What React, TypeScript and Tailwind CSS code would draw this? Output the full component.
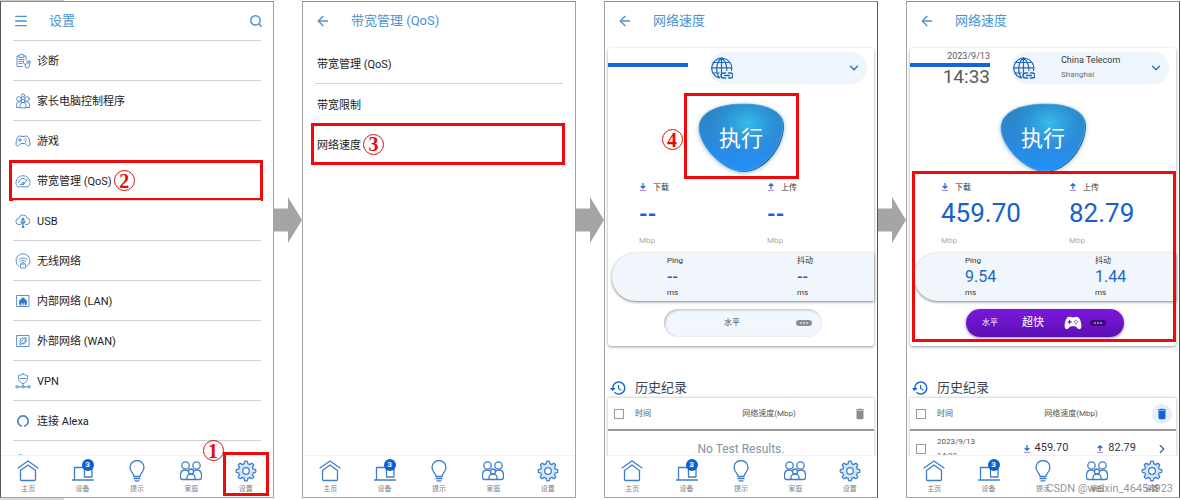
import React from 'react'
import clsx from 'clsx'
import { ArrowLeft, ChevronDown, ChevronRight, Menu, Search } from 'lucide-react'
import { IoGameController, IoGameControllerOutline } from 'react-icons/io5'
import { MdDelete, MdHistory } from 'react-icons/md'

interface Props {
  children?: React.ReactNode
  className?: string
}

// ---------- icons ----------

const ListIcon = ({ children }: Props): JSX.Element => (
  <svg className="size-4 shrink-0" viewBox="0 0 16 16" fill="none" stroke="#4a86c8" strokeWidth="0.9" strokeLinejoin="round" strokeLinecap="round">
    {children}
  </svg>
)

const DiagnoseIcon = (): JSX.Element => (
  <ListIcon>
    <path d="M4 3H2v10.500h5.500M9 3h2v3.500M4 4V2h1.200L5.800 1h1.400l.6 1H9v2z" />
    <path d="M4 6.500h5M4 8.500h3.500M4 10.500h3" />
    <path d="M8.500 8v1.500a1.800 1.800 0 0 0 3.600 0V8M10.300 11.400V13a2 2 0 0 0 4 0v-2.500" />
    <circle cx="14" cy="9" r="1.300" />
  </ListIcon>
)

const ParentIcon = (): JSX.Element => (
  <ListIcon>
    <circle cx="8" cy="2.500" r="1.600" />
    <circle cx="4" cy="6" r="2.300" />
    <circle cx="12" cy="6" r="2.300" />
    <circle cx="8" cy="8" r="1.700" />
    <path d="M5 14.500H1.500v-3a3 3 0 0 1 3-2.700h1M11 14.500h3.500v-3a3 3 0 0 0-3-2.700h-1M5 14.500v-2.200a3 3 0 0 1 6 0v2.200zM6.500 5V4.500M9.500 5V4.500" />
  </ListIcon>
)

const GaugeIcon = (): JSX.Element => (
  <ListIcon>
    <path d="M2.500 13.500C1.300 12.500 1 11 1 9.700a7 7 0 0 1 14 0c0 1.300-.4 2.800-1.500 3.800z" />
    <path d="M3.500 9.500a4.600 4.600 0 0 1 8-2.600M8.500 11.200 12 7M5 11.500h3" />
    <circle cx="8" cy="10.500" r="1.100" />
  </ListIcon>
)

const UsbIcon = (): JSX.Element => (
  <ListIcon>
    <path d="M5.500 11.500H4A3 3 0 0 1 3.800 5.500 4.200 4.200 0 0 1 12 5a3.300 3.300 0 0 1 .2 6.500h-1.700" />
    <path d="M8 14.500V5.500M6.800 6.800 8 5.200l1.200 1.600M6.300 8.300v1.400L8 11M9.700 8v1.500L8 10.500" strokeWidth="1.200" />
    <circle cx="8" cy="14" r="0.800" fill="#3572c0" />
  </ListIcon>
)

const WifiIcon = (): JSX.Element => (
  <ListIcon>
    <path d="M4 13.500a7 7 0 1 1 8 0" />
    <path d="M4 6.500a5.600 5.600 0 0 1 8 0M5.300 8.300a3.800 3.800 0 0 1 5.400 0M6.600 10a2 2 0 0 1 2.800 0" />
    <rect x="5.500" y="11" width="5" height="4" rx="0.500" />
  </ListIcon>
)

const LanIcon = (): JSX.Element => (
  <ListIcon>
    <rect x="2" y="2.500" width="12" height="11" />
    <path d="M4.500 11.500V7.500h1.300V6.200h1.200V5h2v1.200h1.200v1.300h1.300v4z" fill="#3572c0" />
    <path d="M6.500 11.700v-1.500M8 11.700v-1.500M9.500 11.700v-1.500" stroke="#fff" strokeWidth="0.600" />
  </ListIcon>
)

const WanIcon = (): JSX.Element => (
  <ListIcon>
    <rect x="2" y="2.500" width="12" height="11" />
    <circle cx="8" cy="8" r="3" />
    <path d="M5.300 9.500c-1 1.200-1.200 2-.6 2.200 1 .3 3-1.200 4.600-2.900s2.600-3.600 2-4.200c-.4-.4-1.300 0-2.200.6M6 8.500l2-1.500" />
  </ListIcon>
)

const VpnIcon = (): JSX.Element => (
  <ListIcon>
    <path d="M8 1c1.500 1 3 1.300 4.500 1.400V5.500c0 2.500-2 4.200-4.500 5.300C5.500 9.700 3.500 8 3.500 5.500V2.400C5 2.300 6.500 2 8 1z" />
    <path d="M5 5.500h6M8 10.800V13M3.500 13.800h3M9.500 13.800h3" />
    <circle cx="2" cy="13.800" r="1.200" />
    <circle cx="8" cy="13.800" r="1.200" />
    <circle cx="14" cy="13.800" r="1.200" />
  </ListIcon>
)

const AlexaIcon = (): JSX.Element => (
  <ListIcon>
    <path d="M6.300 13A5.200 5.200 0 1 1 9.700 13" strokeWidth="1.700" />
  </ListIcon>
)

const MoreIcon = (): JSX.Element => (
  <ListIcon>
    <path d="M4 2h4v2H4z" />
  </ListIcon>
)

const NavIcon = ({ children }: Props): JSX.Element => (
  <svg className="size-[22px]" viewBox="0 0 22 22" fill="none" stroke="#3f7dca" strokeWidth="1.300" strokeLinejoin="round" strokeLinecap="round">
    {children}
  </svg>
)

const gearPoints = Array.from({ length: 96 }, (_, i) => {
  const a = (i / 96) * Math.PI * 2
  const wave = Math.max(-1, Math.min(1, Math.cos(a * 8) * 2))
  const r = 8.6 + wave * 1.2
  return `${(11 + r * Math.sin(a)).toFixed(2)},${(11 - r * Math.cos(a)).toFixed(2)}`
}).join(' ')

const GlobeLinkIcon = (): JSX.Element => (
  <svg className="size-[22px] shrink-0" viewBox="1 1 22 22" fill="none" stroke="#2467b8" strokeWidth="1.200" strokeLinecap="round">
    <path d="M9 21.800A10 10 0 1 1 21.500 14.500" />
    <path d="M11.500 2C5.500 7 5.500 17 9.500 21.800M11.500 2C16 5.500 17 10 16.800 14.500M11.500 2v15M1.500 11.800H21.500M3.300 6.500h16.500M3.300 17h6" />
    <path d="M15.500 17h-2a2.500 2.500 0 0 0 0 5h2M18.500 17h2a2.500 2.500 0 0 1 0 5h-2M14.500 19.500h5" strokeWidth="1.500" />
  </svg>
)

const TransferIcon = ({ up = false }: { up?: boolean }): JSX.Element => (
  <svg className="size-2 shrink-0" viewBox="0 0 8 8" fill="none" stroke="#1c62c9" strokeWidth="1.200">
    <path d={up ? 'M4 6V1M1.700 3 4 .8 6.300 3' : 'M4 0v5M1.700 3 4 5.200 6.300 3'} />
    <path d="M1 7.400h6" stroke="#a06ad6" strokeWidth="0.900" />
  </svg>
)

// ---------- annotations ----------

const Step = ({ n, className }: { n: number, className?: string }): JSX.Element => (
  <span className={clsx('flex size-[21px] items-center justify-center rounded-full border border-[#e60b0b] font-["Liberation_Serif",serif] text-[20px] leading-none font-bold text-[#e60b0b]', className)}>
    {n}
  </span>
)

const RedBox = ({ className }: Props): JSX.Element => (
  <span className={clsx('pointer-events-none absolute border-3 border-[#ee0a0a]', className)} />
)

const FlowArrow = (): JSX.Element => (
  <svg className="mt-[195px] h-12 w-7 shrink-0" viewBox="0 0 28 48" fill="#a5a5a5">
    <path d="M0 12.500h14V1l14 23L14 47V35.500H0z" />
  </svg>
)

// ---------- phone frame ----------

const tabs = [
  {
    label: '主页',
    icon: <NavIcon><path d="M1 8 11 1l10 7M3.500 10.500 11 5l7.500 5.500v9a1 1 0 0 1-1 1h-13a1 1 0 0 1-1-1z" /></NavIcon>
  },
  {
    label: '设备',
    icon: <NavIcon><path d="M2.500 19V7.500H12M.500 20h21M20 9v8h-7.500V7" /></NavIcon>,
    badge: 3
  },
  {
    label: '提示',
    icon: (
      <NavIcon>
        <path d="M8 16.500c0-3-4-5-4-9a7 7 0 0 1 14 0c0 4-4 6-4 9z" />
        <path d="M8 18.500h6M9 20.800h4" />
      </NavIcon>
    )
  },
  {
    label: '家庭',
    icon: (
      <NavIcon>
        <circle cx="5.500" cy="5.500" r="3.700" />
        <circle cx="16.500" cy="5.500" r="3.700" />
        <circle cx="11" cy="11.500" r="2.500" />
        <path d="M7 19.500H2.500a2 2 0 0 1-2-2V15c0-3 2-5 5-5l2.500.8M15 19.500h4.500a2 2 0 0 0 2-2V15c0-3-2-5-5-5l-2.500.8M7 19.500v-2a4 3.500 0 0 1 8 0v2z" />
      </NavIcon>
    )
  },
  {
    label: '设置',
    icon: (
      <NavIcon>
        <polygon points={gearPoints} fill="#d3e8fb" />
        <circle cx="11" cy="11" r="3.300" fill="#fff" />
      </NavIcon>
    )
  }
]

const TabBar = ({ marked = false }: { marked?: boolean }): JSX.Element => (
  <nav className="relative grid h-[42px] shrink-0 grid-cols-5 border-t border-[#f1f1f1] bg-white">
    {tabs.map((tab, i) => (
      <button key={tab.label} type="button" className="relative flex flex-col items-center gap-px pt-1">
        <span className="relative">
          {tab.icon}
          {tab.badge !== undefined && (
            <span className="absolute -top-px right-0 flex size-3 items-center justify-center rounded-full bg-[#0b62d6] text-[8px] leading-none font-bold text-white">
              {tab.badge}
            </span>
          )}
        </span>
        <span className="text-[7px] leading-3 text-[#808080]">{tab.label}</span>
        {marked && i === 4 && (
          <>
            <RedBox className="inset-x-1 -top-1 bottom-px" />
            <Step n={1} className="absolute -top-4 -left-4" />
          </>
        )}
      </button>
    ))}
  </nav>
)

interface PhoneProps extends Props {
  title: string
  home?: boolean
  marked?: boolean
  overlay?: React.ReactNode
}

const Phone = ({ title, home = false, marked, overlay, className, children }: PhoneProps): JSX.Element => (
  <section className={clsx('relative flex min-w-0 flex-1 flex-col border border-t-[#8c8c8c] border-b-[#a3a3a3] bg-white', className)}>
    <header className="flex h-[37px] shrink-0 items-center pr-2.5 pl-3 text-[#4b93d0]">
      <button type="button" aria-label={home ? '菜单' : '返回'} className="w-9">
        {home ? <Menu className="size-4" strokeWidth={2} /> : <ArrowLeft className="size-4" strokeWidth={2} />}
      </button>
      <h1 className="text-[13px] leading-5">{title}</h1>
      {home && (
        <button type="button" aria-label="搜索" className="ml-auto">
          <Search className="size-3.5" strokeWidth={2.5} />
        </button>
      )}
    </header>
    <div className="min-h-0 flex-1 overflow-hidden">{children}</div>
    <TabBar marked={marked} />
    {overlay}
  </section>
)

// ---------- screens ----------

const settings = [
  { label: '诊断', icon: <DiagnoseIcon /> },
  { label: '家长电脑控制程序', icon: <ParentIcon /> },
  { label: '游戏', icon: <IoGameControllerOutline className="size-4 shrink-0 text-[#4a86c8]" /> },
  { label: '带宽管理 (QoS)', icon: <GaugeIcon />, step: 2 },
  { label: 'USB', icon: <UsbIcon /> },
  { label: '无线网络', icon: <WifiIcon /> },
  { label: '内部网络 (LAN)', icon: <LanIcon /> },
  { label: '外部网络 (WAN)', icon: <WanIcon /> },
  { label: 'VPN', icon: <VpnIcon /> },
  { label: '连接 Alexa', icon: <AlexaIcon /> },
  { label: '', icon: <MoreIcon /> }
]

const SettingsList = (): JSX.Element => (
  <ul className="mx-3 mt-px">
    {settings.map((item) => (
      <li key={item.label} className="relative flex h-10 items-center gap-1.5 border-t border-[#d2d2d2] pl-0.5 text-[11px] text-[#1c1c1c]">
        {item.icon}
        <span className="pt-1">{item.label}</span>
        {item.step !== undefined && (
          <>
            <Step n={item.step} className="-ml-1" />
            <RedBox className="-inset-y-px -right-0.5 -left-1" />
          </>
        )}
      </li>
    ))}
  </ul>
)

const QosList = (): JSX.Element => (
  <ul className="mx-3 mt-[5px] text-[11px] text-[#1c1c1c]">
    <li className="flex h-10 items-center border-b border-[#d2d2d2] pt-1 pl-0.5">带宽管理 (QoS)</li>
    <li className="flex h-10 items-center pt-1 pl-0.5">带宽限制</li>
    <li className="relative flex h-10 items-center gap-0.5 pl-0.5">
      <span className="pt-1">网络速度</span>
      <Step n={3} />
      <RedBox className="-inset-y-px -right-0.5 -left-1" />
    </li>
  </ul>
)

interface Result {
  date: string
  time: string
  isp: string
  city: string
  down: string
  up: string
  ping: string
  jitter: string
}

const Speed = ({ label, value, up }: { label: string, value?: string, up?: boolean }): JSX.Element => (
  <div>
    <div className="flex h-4 items-center gap-1.5 text-[8px] text-[#333]">
      <TransferIcon up={up} />
      <span className="pt-0.5">{label}</span>
    </div>
    <div className="h-9 text-[26px] leading-9 text-[#1660d0]">
      {value ?? <span className="text-[22px] font-bold">--</span>}
    </div>
    <div className="mt-0.5 text-[8px] leading-4 text-[#a9adb3]">Mbp</div>
  </div>
)

const Latency = ({ label, value }: { label: string, value?: string }): JSX.Element => (
  <div className="text-[8px] leading-4 text-[#333]">
    <div>{label}</div>
    <div className="text-[16px] text-[#1b67c4]">{value ?? <span className="font-medium">--</span>}</div>
    <div>ms</div>
  </div>
)

const Blob = (): JSX.Element => (
  <svg className="col-start-1 row-start-1 h-[70px] w-[87px] drop-shadow-[0_1px_2px_rgba(80,120,160,0.5)]" viewBox="0 0 87 70">
    <defs>
      <linearGradient id="blobBase" x1="0" y1="0" x2="0" y2="1">
        <stop offset="0" stopColor="#2a83be" />
        <stop offset="0.5" stopColor="#2c88d6" />
        <stop offset="1" stopColor="#2290fb" />
      </linearGradient>
      <radialGradient id="blobGlow" cx="0.58" cy="0.28" r="0.5">
        <stop offset="0" stopColor="#35bfec" />
        <stop offset="1" stopColor="#2c90e0" stopOpacity="0" />
      </radialGradient>
    </defs>
    <path d="M1 25C1 8 22 1 46 1c22 0 40 7 40 22 0 20-18 46-41 46C26 69 1 43 1 25z" fill="#1c5f9c" />
    <path d="M1 25C1 8 22 1 46 1c22 0 39 7 39 21 0 20-18 46-41 46C25 68 1 43 1 25z" fill="url(#blobBase)" />
    <path d="M1 25C1 8 22 1 46 1c22 0 39 7 39 21 0 20-18 46-41 46C25 68 1 43 1 25z" fill="url(#blobGlow)" stroke="#56b5e6" strokeWidth="0.700" />
  </svg>
)

const Dots = ({ className }: Props): JSX.Element => (
  <span className={clsx('flex h-1.5 w-4 items-center justify-center gap-px rounded-full', className)}>
    <i className="size-0.5 rounded-full bg-white/60" />
    <i className="size-0.5 rounded-full bg-white/60" />
    <i className="size-0.5 rounded-full bg-white/60" />
  </span>
)

const SpeedTest = ({ result }: { result?: Result }): JSX.Element => (
  <>
    <div className="relative mx-[3px] mt-[9px] rounded-[3px] bg-white pb-[9px] shadow-[0_1px_3px_rgba(0,0,0,0.4)]">
      <div className="flex justify-between pr-[7px]">
        <div className="w-20 pt-0.5 text-right text-[#5a5a5a]">
          <div className="h-3 text-[9px] leading-3">{result?.date}</div>
          <div className="mt-px h-1 bg-[#1565d8]" />
          <div className="h-5 text-[19px] leading-5">{result?.time}</div>
        </div>
        <button type="button" className="mt-1 flex h-8 w-[158px] items-center rounded-full bg-[#eef5fd] pr-1.5 pl-0.5 text-left">
          <GlobeLinkIcon />
          {result !== undefined && (
            <span className="ml-[26px] text-[8px] leading-4 text-[#6b6f75]">
              <span className="block text-[9px] leading-[14px] text-[#3a3a3a]">{result.isp}</span>
              {result.city}
            </span>
          )}
          <ChevronDown className="ml-auto size-3.5 text-[#2a6db8]" strokeWidth={2.2} />
        </button>
      </div>

      <div className="mt-4 flex justify-center">
        <button type="button" className="relative grid place-items-center">
          <Blob />
          <span className="z-10 col-start-1 row-start-1 pt-0.5 text-[22px] leading-8 text-white">执行</span>
          {result === undefined && (
            <>
              <RedBox className="-inset-x-3.5 -top-2.5 -bottom-1.5" />
              <Step n={4} className="absolute top-[26px] -left-9" />
            </>
          )}
        </button>
      </div>

      <div className="mt-1.5 grid grid-cols-[128px_1fr] pl-[31px]">
        <Speed label="下载" value={result?.down} />
        <Speed label="上传" value={result?.up} up />
      </div>

      <div className={clsx('mt-1 ml-1 grid grid-cols-[130px_1fr] rounded-l-full bg-[#f1f6fd] shadow-[0_1px_3px_rgba(0,0,0,0.5)]', result !== undefined ? 'pl-[51px]' : 'pl-[55px]')}>
        <Latency label="Ping" value={result?.ping} />
        <Latency label="抖动" value={result?.jitter} />
      </div>

      {result === undefined
        ? (
          <div className="mt-2 mr-[52px] ml-auto flex h-7 w-[158px] items-center justify-between rounded-full bg-[#f2f6fd] pr-2.5 pl-[60px] text-[8px] text-[#444] shadow-[inset_1px_1px_3px_rgba(0,0,0,0.25)]">
            水平
            <Dots className="bg-[#8b8f96]" />
          </div>
          )
        : (
          <div className="mt-2 mr-[52px] ml-auto flex h-7 w-[158px] items-center justify-between rounded-full bg-linear-to-b from-[#7b17dc] to-[#5d10b4] pr-[18px] pl-4 text-[8px] text-white shadow-[0_1px_3px_rgba(60,0,120,0.5)]">
            水平
            <span className="ml-1 text-[11px]">超快</span>
            <span className="flex items-center gap-2">
              <IoGameController className="size-[18px]" />
              <Dots className="bg-[#3b0a78]" />
            </span>
          </div>
          )}

      {result !== undefined && <RedBox className="top-[123px] right-0 bottom-1 left-0.5" />}
    </div>

    <h2 className="mt-8 flex items-center gap-2 pl-1 text-[13px] leading-5 text-[#3c4350]">
      <MdHistory className="size-[18px] text-[#1565d8]" />
      历史纪录
    </h2>
    <div className="mx-[3px] shadow-[0_0_3px_rgba(0,0,0,0.3)]">
      <table className="w-full table-fixed text-[8px] text-[#555]">
        <colgroup>
          <col className="w-[27px]" />
          <col className="w-[57px]" />
          <col />
          <col className="w-7" />
        </colgroup>
        <thead>
          <tr className="h-8 border-b-2 border-[#999]">
            <th className="pl-1.5 text-left">
              <input type="checkbox" aria-label="全选" className="block size-2.5 appearance-none border border-[#9a9a9a]" />
            </th>
            <th className="text-left font-normal">时间</th>
            <th className="font-normal">网络速度(Mbp)</th>
            <th>
              <button type="button" aria-label="删除" className={clsx('mx-auto flex size-5 items-center justify-center rounded-full', result !== undefined ? 'bg-[#e3effc] text-[#1565d8]' : 'text-[#8b8b8b]')}>
                <MdDelete className="size-3.5" />
              </button>
            </th>
          </tr>
        </thead>
        <tbody>
          {result === undefined
            ? (
              <tr>
                <td colSpan={4} className="pt-2 pb-4 text-center text-[12px] leading-5 text-[#8592a3]">No Test Results.</td>
              </tr>
              )
            : (
              <tr className="h-9">
                <td className="pl-1.5">
                  <input type="checkbox" aria-label={result.date} className="block size-2.5 appearance-none border border-[#9a9a9a]" />
                </td>
                <td className="leading-[14px]">
                  {result.date}
                  <br />
                  {result.time}
                </td>
                <td className="text-[11px] text-[#333]">
                  <div className="flex justify-end gap-7 pr-3">
                    <span className="flex items-center gap-1"><TransferIcon />{result.down}</span>
                    <span className="flex items-center gap-1"><TransferIcon up />{result.up}</span>
                  </div>
                </td>
                <td>
                  <ChevronRight className="mx-auto size-3.5 text-[#2a6db8]" strokeWidth={2.2} />
                </td>
              </tr>
              )}
        </tbody>
      </table>
    </div>
  </>
)

const result: Result = {
  date: '2023/9/13',
  time: '14:33',
  isp: 'China Telecom',
  city: 'Shanghai',
  down: '459.70',
  up: '82.79',
  ping: '9.54',
  jitter: '1.44'
}

const App = (): JSX.Element => {
  return (
    <main className="flex h-screen flex-col bg-white font-[Roboto,'Noto_Sans_CJK_SC',sans-serif]">
      <div className="h-px w-16 shrink-0 bg-[#c9ccd0]" />
      <div className="flex min-h-0 flex-1 pr-px">
        <Phone title="设置" home marked className="border-r-[#a3a3a3] border-l-[#555]">
          <SettingsList />
        </Phone>
        <FlowArrow />
        <Phone title="带宽管理 (QoS)" className="border-r-[#a3a3a3] border-l-[#a3a3a3]">
          <QosList />
        </Phone>
        <FlowArrow />
        <Phone title="网络速度" className="border-r-[#555] border-l-[#a3a3a3]">
          <SpeedTest />
        </Phone>
        <FlowArrow />
        <Phone
          title="网络速度"
          className="border-r-[#555] border-l-[#a3a3a3]"
          overlay={<span className="absolute right-1.5 bottom-0 text-[11px] leading-4 text-[#777]/80">CSDN @weixin_46454923</span>}
        >
          <SpeedTest result={result} />
        </Phone>
      </div>
      <div className="h-0.5 w-16 shrink-0 bg-[#d8d8d8]" />
    </main>
  )
}

export default App
